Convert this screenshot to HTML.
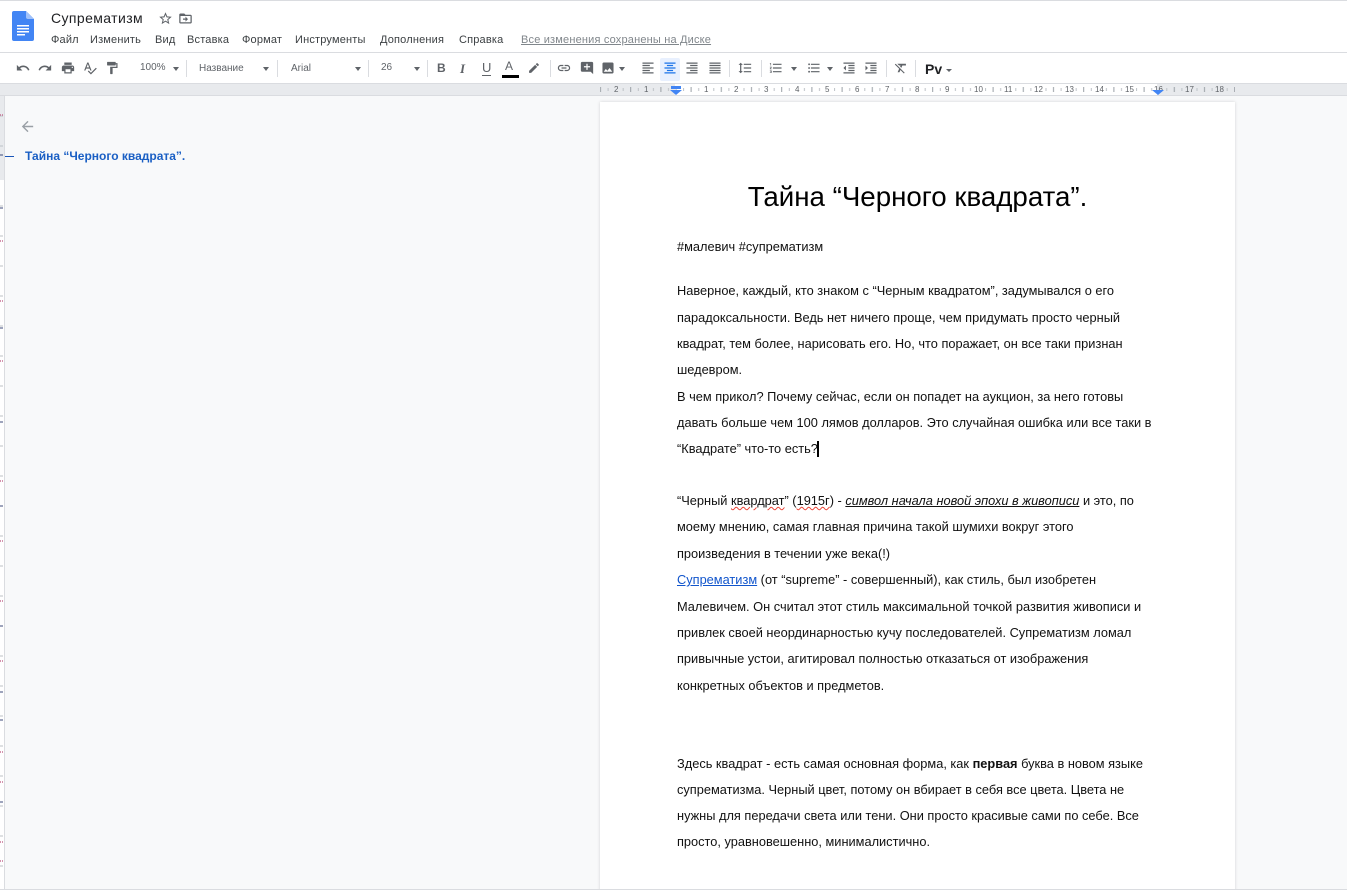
<!DOCTYPE html>
<html lang="ru"><head><meta charset="utf-8"><title>Супрематизм</title>
<style>
html,body{margin:0;padding:0;width:1347px;height:893px;overflow:hidden;background:#f8f9fa;font-family:"Liberation Sans",Arial,sans-serif;color:#000}
.a{position:absolute;white-space:nowrap}
.m{top:33px;font-size:11px;line-height:14px;color:#3c4043;letter-spacing:.18px}
.t{font-size:10px;line-height:12px;color:#5f6368;top:62px}
.l{left:677px;font-size:12.8px;line-height:16px;color:#111;transform-origin:0 0}
.i{position:absolute;width:18px;height:18px;fill:#5f6368;transform:scale(.82)}
.h{transform:none}
.s{position:absolute;top:60px;width:1px;height:17px;background:#dadce0}
.d{position:absolute;top:67px;width:0;height:0;border-left:3.5px solid transparent;border-right:3.5px solid transparent;border-top:4px solid #5f6368}
.r{top:85px;font-size:8px;line-height:9px;color:#5f6368}
</style></head><body>
<div class="a" style="left:0;top:0;width:1347px;height:1px;background:#dadce0"></div>
<div class="a" style="left:0;top:1px;width:1347px;height:82px;background:#fff"></div>
<div class="a" style="left:0;top:52px;width:1347px;height:1px;background:#dadce0"></div>
<div class="a" style="left:0;top:83px;width:1347px;height:13px;background:#e8eaed;border-top:1px solid #dadce0;border-bottom:1px solid #dadce0;box-sizing:border-box"></div>

<svg class="a" style="left:12px;top:11px" width="22" height="30" viewBox="0 0 22 30"><path d="M2 0h12l8 8v20a2 2 0 0 1-2 2H2a2 2 0 0 1-2-2V2a2 2 0 0 1 2-2z" fill="#4285f4"/><path d="M14 0l8 8h-6a2 2 0 0 1-2-2z" fill="#a1c2fa"/><path d="M5 14h12v1.5H5zM5 17h12v1.5H5zM5 20h12v1.5H5zM5 23h8v1.5H5z" fill="#fff"/></svg>
<div class="a" style="left:51px;top:10px;font-size:14px;line-height:17px;color:#202124;letter-spacing:.4px">Супрематизм</div>
<svg class="i h" style="left:158px;top:11px;width:15px;height:15px" viewBox="0 0 24 24"><path d="M22 9.24l-7.19-.62L12 2 9.19 8.63 2 9.24l5.46 4.73L5.82 21 12 17.27 18.18 21l-1.63-7.03L22 9.24zM12 15.4l-3.76 2.27 1-4.28-3.32-2.88 4.38-.38L12 6.1l1.71 4.04 4.38.38-3.32 2.88 1 4.28L12 15.4z"/></svg>
<svg class="i h" style="left:178px;top:11px;width:15px;height:15px" viewBox="0 0 24 24"><path d="M20 6h-8l-2-2H4c-1.1 0-2 .9-2 2v12c0 1.1.9 2 2 2h16c1.1 0 2-.9 2-2V8c0-1.1-.9-2-2-2zm0 12H4V8h16v10zm-8-1l4-4-4-4v3H8v2h4z"/></svg>
<div class="a m" style="left:51px">Файл</div>
<div class="a m" style="left:90px">Изменить</div>
<div class="a m" style="left:155px">Вид</div>
<div class="a m" style="left:187px">Вставка</div>
<div class="a m" style="left:242px">Формат</div>
<div class="a m" style="left:295px">Инструменты</div>
<div class="a m" style="left:380px">Дополнения</div>
<div class="a m" style="left:459px">Справка</div>
<div class="a m" style="left:521px;color:#80868b;text-decoration:underline">Все изменения сохранены на Диске</div>

<svg class="i" style="left:14px;top:59px" viewBox="0 0 24 24"><path d="M12.5 8c-2.65 0-5.05.99-6.9 2.6L2 7v9h9l-3.62-3.62c1.39-1.16 3.16-1.88 5.12-1.88 3.54 0 6.55 2.31 7.6 5.5l2.37-.78C21.08 11.03 17.15 8 12.5 8z"/></svg>
<svg class="i" style="left:36px;top:59px" viewBox="0 0 24 24"><path d="M18.4 10.6C16.55 8.99 14.15 8 11.5 8c-4.65 0-8.58 3.03-9.96 7.22L3.9 16c1.05-3.19 4.05-5.5 7.6-5.5 1.95 0 3.73.72 5.12 1.88L13 16h9V7l-3.6 3.6z"/></svg>
<svg class="i" style="left:59px;top:59px" viewBox="0 0 24 24"><path d="M19 8H5c-1.66 0-3 1.34-3 3v6h4v4h12v-4h4v-6c0-1.66-1.34-3-3-3zm-3 11H8v-5h8v5zm3-7c-.55 0-1-.45-1-1s.45-1 1-1 1 .45 1 1-.45 1-1 1zm-1-9H6v4h12V3z"/></svg>
<svg class="i" style="left:81px;top:59px" viewBox="0 0 24 24"><path d="M12.45 16h2.09L9.43 3H7.57L2.46 16h2.09l1.12-3h5.64l1.14 3zm-6.02-5L8.5 5.48 10.57 11H6.43zm15.16.59l-8.09 8.09L9.83 16l-1.41 1.41 5.09 5.09L23 13l-1.41-1.41z"/></svg>
<svg class="i" style="left:103px;top:59px" viewBox="0 0 24 24"><path d="M18 4V3c0-.55-.45-1-1-1H5c-.55 0-1 .45-1 1v4c0 .55.45 1 1 1h12c.55 0 1-.45 1-1V6h1v4H9v11c0 .55.45 1 1 1h2c.55 0 1-.45 1-1v-9h8V4h-3z"/></svg>

<div class="a t" style="left:140px">100%</div><div class="d" style="left:173px"></div><div class="s" style="left:186px"></div>
<div class="a t" style="left:199px;top:63px">Название</div><div class="d" style="left:263px"></div><div class="s" style="left:277px"></div>
<div class="a t" style="left:291px;top:63px">Arial</div><div class="d" style="left:355px"></div><div class="s" style="left:368px"></div>
<div class="a t" style="left:381px">26</div><div class="d" style="left:414px"></div><div class="s" style="left:427px"></div>

<div class="a" style="left:437px;top:61px;font-size:12px;line-height:15px;font-weight:bold;color:#5f6368">B</div>
<div class="a" style="left:460px;top:61px;font-size:13px;line-height:15px;font-style:italic;font-family:'Liberation Serif',serif;font-weight:bold;color:#5f6368">I</div>
<div class="a" style="left:482px;top:61px;font-size:13px;line-height:14px;color:#5f6368;border-bottom:1.5px solid #5f6368;height:14px">U</div>
<div class="a" style="left:505px;top:60px;font-size:12px;line-height:13px;color:#5f6368">A</div>
<div class="a" style="left:502px;top:75px;width:17px;height:3px;background:#000"></div>
<svg class="i" style="left:526px;top:60px;width:16px;height:16px" viewBox="0 0 24 24"><path d="M3 17.25V21h3.75L17.81 9.94l-3.75-3.75L3 17.25zM20.71 7.04c.39-.39.39-1.02 0-1.41l-2.34-2.34c-.39-.39-1.02-.39-1.41 0l-1.83 1.83 3.75 3.75 1.83-1.83z"/></svg>
<div class="s" style="left:550px"></div>
<svg class="i" style="left:555px;top:59px" viewBox="0 0 24 24"><path d="M3.9 12c0-1.71 1.39-3.1 3.1-3.1h4V7H7c-2.76 0-5 2.24-5 5s2.24 5 5 5h4v-1.9H7c-1.71 0-3.1-1.39-3.1-3.1zM8 13h8v-2H8v2zm9-6h-4v1.9h4c1.71 0 3.1 1.39 3.1 3.1s-1.39 3.1-3.1 3.1h-4V17h4c2.76 0 5-2.24 5-5s-2.24-5-5-5z"/></svg>
<svg class="i" style="left:578px;top:59px" viewBox="0 0 24 24"><path d="M20 2H4c-1.1 0-2 .9-2 2v12c0 1.1.9 2 2 2h14l4 4V4c0-1.1-.9-2-2-2zm-3 9h-4v4h-2v-4H7V9h4V5h2v4h4v2z"/></svg>
<svg class="i" style="left:599px;top:59px" viewBox="0 0 24 24"><path d="M21 19V5c0-1.1-.9-2-2-2H5c-1.1 0-2 .9-2 2v14c0 1.1.9 2 2 2h14c1.1 0 2-.9 2-2zM8.5 13.5l2.5 3.01L14.5 12l4.5 6H5l3.5-4.5z"/></svg>
<div class="d" style="left:619px"></div>

<svg class="i" style="left:639px;top:59px" viewBox="0 0 24 24"><path d="M3 3h18v2H3zM3 7h12v2H3zM3 11h18v2H3zM3 15h12v2H3zM3 19h18v2H3z"/></svg>
<div class="a" style="left:660px;top:58px;width:20px;height:23px;background:#e8f0fe;border-radius:2px"></div>
<svg class="i" style="left:661px;top:59px;fill:#1a73e8" viewBox="0 0 24 24"><path d="M3 3h18v2H3zM7 7h10v2H7zM3 11h18v2H3zM7 15h10v2H7zM3 19h18v2H3z"/></svg>
<svg class="i" style="left:683px;top:59px" viewBox="0 0 24 24"><path d="M3 3h18v2H3zM9 7h12v2H9zM3 11h18v2H3zM9 15h12v2H9zM3 19h18v2H3z"/></svg>
<svg class="i" style="left:706px;top:59px" viewBox="0 0 24 24"><path d="M3 3h18v2H3zM3 7h18v2H3zM3 11h18v2H3zM3 15h18v2H3zM3 19h18v2H3z"/></svg>
<div class="s" style="left:729px"></div>
<svg class="i" style="left:736px;top:59px" viewBox="0 0 24 24"><path d="M6 7h2.5L5 3.5 1.5 7H4v10H1.5L5 20.5 8.5 17H6V7zm4-2v2h12V5H10zm0 14h12v-2H10v2zm0-6h12v-2H10v2z"/></svg>
<div class="s" style="left:761px"></div>
<svg class="i" style="left:767px;top:59px" viewBox="0 0 24 24"><path d="M2 17h2v.5H3v1h1v.5H2v1h3v-4H2v1zm1-9h1V4H2v1h1v3zm-1 3h1.8L2 13.1v.9h3v-1H3.2L5 10.9V10H2v1zm5-6v2h14V5H7zm0 14h14v-2H7v2zm0-6h14v-2H7v2z"/></svg>
<div class="d" style="left:791px"></div>
<svg class="i" style="left:805px;top:59px" viewBox="0 0 24 24"><path d="M4 10.5c-.83 0-1.5.67-1.5 1.5s.67 1.5 1.5 1.5 1.5-.67 1.5-1.5-.67-1.5-1.5-1.5zm0-6c-.83 0-1.5.67-1.5 1.5S3.17 7.5 4 7.5 5.5 6.83 5.5 6 4.83 4.5 4 4.5zm0 12c-.83 0-1.5.68-1.5 1.5s.68 1.5 1.5 1.5 1.5-.68 1.5-1.5-.67-1.5-1.5-1.5zM7 19h14v-2H7v2zm0-6h14v-2H7v2zm0-8v2h14V5H7z"/></svg>
<div class="d" style="left:827px"></div>
<svg class="i" style="left:840px;top:59px" viewBox="0 0 24 24"><path d="M11 17h10v-2H11v2zm-8-5l4 4V8l-4 4zm0 9h18v-2H3v2zM3 3v2h18V3H3zm8 6h10V7H11v2zm0 4h10v-2H11v2z"/></svg>
<svg class="i" style="left:862px;top:59px" viewBox="0 0 24 24"><path d="M3 21h18v-2H3v2zM3 8v8l4-4-4-4zm8 9h10v-2H11v2zM3 3v2h18V3H3zm8 6h10V7H11v2zm0 4h10v-2H11v2z"/></svg>
<div class="s" style="left:886px"></div>
<svg class="i" style="left:892px;top:59px" viewBox="0 0 24 24"><path d="M3.27 5L2 6.27l6.97 6.97L6.5 19h3l1.57-3.66L16.73 21 18 19.73 3.55 5.27 3.27 5zM6 5v.18L8.82 8h2.4l-.72 1.68 2.1 2.1L14.21 8H20V5H6z"/></svg>
<div class="s" style="left:915px"></div>
<div class="a" style="left:925px;top:62px;font-size:14px;line-height:15px;font-weight:bold;color:#202124">Pv</div>
<div class="d" style="left:946px;top:69px;border-left-width:3px;border-right-width:3px;border-top-width:3px"></div>

<!-- horizontal ruler -->
<div class="a" style="left:675px;top:84px;width:482px;height:11px;background:#fff"></div>
<svg class="a" style="left:585px;top:84px" width="650" height="11" viewBox="0 0 650 11">
<defs><pattern id="tk" x="0" y="0" width="30.2" height="11" patternUnits="userSpaceOnUse"><rect x="0" y="4" width="1" height="3" fill="#bdc1c6"/><rect x="7.5" y="4" width="1" height="3" fill="#bdc1c6"/><rect x="15" y="3" width="1" height="5" fill="#9aa0a6"/><rect x="22.6" y="4" width="1" height="3" fill="#bdc1c6"/></pattern></defs>
<rect x="15" width="636" height="11" fill="url(#tk)"/></svg>
<div class="a r" style="left:613px;background:#e8eaed;padding:0 1px">2</div>
<div class="a r" style="left:643px;background:#e8eaed;padding:0 1px">1</div>
<div class="a r" style="left:703px;background:#fff;padding:0 1px">1</div>
<div class="a r" style="left:733px;background:#fff;padding:0 1px">2</div>
<div class="a r" style="left:763px;background:#fff;padding:0 1px">3</div>
<div class="a r" style="left:794px;background:#fff;padding:0 1px">4</div>
<div class="a r" style="left:824px;background:#fff;padding:0 1px">5</div>
<div class="a r" style="left:854px;background:#fff;padding:0 1px">6</div>
<div class="a r" style="left:884px;background:#fff;padding:0 1px">7</div>
<div class="a r" style="left:914px;background:#fff;padding:0 1px">8</div>
<div class="a r" style="left:944px;background:#fff;padding:0 1px">9</div>
<div class="a r" style="left:973px;background:#fff;padding:0 1px">10</div>
<div class="a r" style="left:1003px;background:#fff;padding:0 1px">11</div>
<div class="a r" style="left:1033px;background:#fff;padding:0 1px">12</div>
<div class="a r" style="left:1064px;background:#fff;padding:0 1px">13</div>
<div class="a r" style="left:1094px;background:#fff;padding:0 1px">14</div>
<div class="a r" style="left:1124px;background:#fff;padding:0 1px">15</div>
<div class="a r" style="left:1154px">16</div>
<div class="a r" style="left:1184px;background:#e8eaed;padding:0 1px">17</div>
<div class="a r" style="left:1214px;background:#e8eaed;padding:0 1px">18</div>
<svg class="a" style="left:670px;top:86px" width="12" height="9" viewBox="0 0 12 9"><rect x="1" y="0" width="10" height="3" fill="#4285f4"/><path d="M0 4h12L6 9z" fill="#4285f4"/></svg>
<svg class="a" style="left:1152px;top:86px" width="12" height="9" viewBox="0 0 12 9"><path d="M0 4h12L6 9z" fill="#4285f4"/></svg>

<!-- vertical ruler -->
<div class="a" style="left:0;top:96px;width:4px;height:797px;background:#fff;border-right:1px solid #dadce0"></div>
<div class="a" style="left:0;top:96px;width:4px;height:84px;background:#e8eaed"></div>
<svg class="a" style="left:0;top:96px" width="4" height="793" viewBox="0 0 4 793">
<path d="M0 20h3M0 50h3M0 110h3M0 140h3M0 170h3M0 200h3M0 230h3M0 260h3M0 290h3M0 320h3M0 350h3M0 380h3M0 410h3M0 440h3M0 470h3M0 500h3M0 530h3M0 560h3M0 590h3M0 620h3M0 650h3M0 680h3M0 710h3M0 740h3M0 770h3" stroke="#bdc1c6"/>
<path d="M0 59h3M0 112h3M0 232h3M0 326h3M0 410h3M0 530h3M0 596h3M0 624h3M0 706h3" stroke="#3c4a7a"/>
<path d="M0 19h3M0 145h3M0 205h3M0 265h3M0 385h3M0 445h3M0 505h3M0 565h3M0 656h3M0 686h3M0 746h3M0 765h3" stroke="#c2668c" stroke-width="2" stroke-dasharray="1 1" opacity=".7"/></svg>

<!-- outline -->
<svg class="a" style="left:19px;top:118px" width="17" height="17" viewBox="0 0 24 24"><path d="M20 11H7.83l5.59-5.59L12 4l-8 8 8 8 1.41-1.41L7.83 13H20v-2z" fill="#9aa0a6"/></svg>
<div class="a" style="left:5px;top:156px;width:9px;height:1px;background:#1a56b8"></div>
<div class="a" style="left:25px;top:149px;font-size:12px;line-height:15px;font-weight:bold;color:#1a5fc4">Тайна “Черного квадрата”.</div>

<!-- page -->
<div class="a" style="left:600px;top:102px;width:635px;height:791px;background:#fff;box-shadow:0 0 3px rgba(60,64,67,.2)"></div>
<div class="a" style="left:600px;top:179px;width:635px;text-align:center;font-size:27.7px;line-height:35px;color:#000">Тайна “Черного квадрата”.</div>

<div class="a l" style="top:239px">#малевич #супрематизм</div>
<div class="a l" style="top:283px">Наверное, каждый, кто знаком с “Черным квадратом”, задумывался о его</div>
<div class="a l" style="top:310px">парадоксальности. Ведь нет ничего проще, чем придумать просто черный</div>
<div class="a l" style="top:336px">квадрат, тем более, нарисовать его. Но, что поражает, он все таки признан</div>
<div class="a l" style="top:362px">шедевром.</div>
<div class="a l" style="top:389px">В чем прикол? Почему сейчас, если он попадет на аукцион, за него готовы</div>
<div class="a l" style="top:415px">давать больше чем 100 лямов долларов. Это случайная ошибка или все таки в</div>
<div class="a l" style="top:441px">“Квадрате” что-то есть?</div>
<div class="a" style="left:817px;top:441px;width:2px;height:16px;background:#000"></div>
<div class="a l" style="top:493px">“Черный <span style="text-decoration:underline wavy #ea4335 1px">квардрат</span>” (<span style="text-decoration:underline wavy #ea4335 1px">1915г</span>) - <span style="font-style:italic;text-decoration:underline">символ начала новой эпохи в живописи</span> и это, по</div>
<div class="a l" style="top:519px">моему мнению, самая главная причина такой шумихи вокруг этого</div>
<div class="a l" style="top:546px">произведения в течении уже века(!)</div>
<div class="a l" style="top:572px"><span style="color:#1155cc;text-decoration:underline">Супрематизм</span> (от “supreme” - совершенный), как стиль, был изобретен</div>
<div class="a l" style="top:599px">Малевичем. Он считал этот стиль максимальной точкой развития живописи и</div>
<div class="a l" style="top:625px">привлек своей неординарностью кучу последователей. Супрематизм ломал</div>
<div class="a l" style="top:651px">привычные устои, агитировал полностью отказаться от изображения</div>
<div class="a l" style="top:678px">конкретных объектов и предметов.</div>
<div class="a l" style="top:756px">Здесь квадрат - есть самая основная форма, как <b>первая</b> буква в новом языке</div>
<div class="a l" style="top:782px">супрематизма. Черный цвет, потому он вбирает в себя все цвета. Цвета не</div>
<div class="a l" style="top:808px">нужны для передачи света или тени. Они просто красивые сами по себе. Все</div>
<div class="a l" style="top:834px">просто, уравновешенно, минималистично.</div>
<div class="a" style="left:0;top:889px;width:1347px;height:1px;background:#dadce0"></div>
<div class="a" style="left:0;top:890px;width:1347px;height:3px;background:#fff"></div>
</body></html>
